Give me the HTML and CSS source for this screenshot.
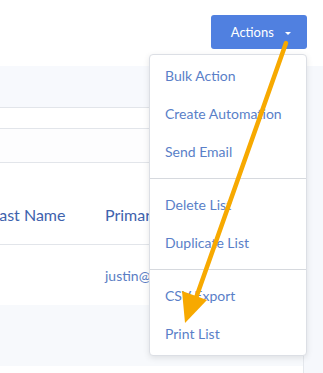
FILE: index.html
```html
<!DOCTYPE html>
<html lang="en">
<head>
    <meta charset="UTF-8">
    <title>List</title>
    <link rel="stylesheet" href="styles.css">
</head>
<body>
    <div class="topbar">
        <button class="actions-btn">Actions <span class="caret"></span></button>
    </div>
    <div class="main">
        <div class="panel">
            <div class="toolbar"></div>
            <div class="row-thin"></div>
            <div class="row-filter"></div>
            <div class="table-head">
                <div class="col col-last">Last Name</div>
                <div class="col col-email">Primary</div>
            </div>
            <div class="table-row">
                <div class="col col-last"></div>
                <div class="col col-email">justin@</div>
            </div>
            <div class="panel-foot"></div>
        </div>
    </div>

    <ul class="menu">
        <li>Bulk Action</li>
        <li>Create Automation</li>
        <li>Send Email</li>
        <li class="divider"></li>
        <li>Delete List</li>
        <li>Duplicate List</li>
        <li class="divider"></li>
        <li>CSV Export</li>
        <li>Print List</li>
    </ul>

    <!-- annotation arrow -->
    <svg class="arrow" width="323" height="373" viewBox="0 0 323 373">
        <line x1="286" y1="43" x2="196" y2="298" stroke="#f7a900" stroke-width="4.5" stroke-linecap="round"/>
        <polygon points="185,323 182,291 207,300" fill="#f7a900"/>
    </svg>
</body>
</html>
```

FILE: styles.css
```css
body {
    margin: 0;
    font-family: Lato, "Open Sans", sans-serif;
    background: #ffffff;
    overflow: hidden;
    height: 373px;
    position: relative;
}

.topbar {
    height: 66px;
    display: flex;
    justify-content: flex-end;
    align-items: flex-start;
    padding-right: 16px;
    box-sizing: border-box;
}

.actions-btn {
    margin-top: 15px;
    width: 96px;
    height: 34px;
    background: #5080e0;
    color: #ffffff;
    border: none;
    border-radius: 3px;
    font-family: Lato, sans-serif;
    font-size: 13px;
    padding: 0 0 0 4px;
}

.caret {
    display: inline-block;
    width: 0;
    height: 0;
    border-left: 3px solid transparent;
    border-right: 3px solid transparent;
    border-top: 3px solid #ffffff;
    margin-left: 8px;
    vertical-align: middle;
}

.main {
    background: #f6f8fc;
    padding-right: 15px;
    height: 307px;
}

.panel {
    background: #ffffff;
    border-right: 1px solid #e4e7ec;
    height: 100%;
    margin-right: 4px;
}

.toolbar {
    height: 41px;
    background: #f7f9fd;
    border-bottom: 1px solid #e2e5ea;
}

.row-thin {
    height: 20px;
    border-bottom: 1px solid #e2e5ea;
}

.row-filter {
    height: 33px;
    background: #fdfdfe;
    border-bottom: 1px solid #e2e5ea;
}

.table-head {
    display: flex;
    height: 82px;
    box-sizing: border-box;
    align-items: flex-end;
    padding-bottom: 20px;
    border-bottom: 1px solid #e2e5ea;
    color: #3e62ad;
    font-size: 16px;
    margin-left: -9px;
}

.table-row {
    display: flex;
    height: 60px;
    align-items: center;
    color: #5a7dc4;
    font-size: 14px;
    margin-left: -9px;
}

.col {
    white-space: nowrap;
}

.col-last {
    width: 114px;
}

.panel-foot {
    height: 61px;
    background: #f7f9fc;
}

.menu {
    position: absolute;
    top: 54px;
    left: 149px;
    width: 156px;
    margin: 0;
    padding: 2px 0;
    list-style: none;
    background: #ffffff;
    border: 1px solid #dcdfe5;
    border-radius: 4px;
    box-shadow: 0 2px 6px rgba(0, 0, 0, 0.1);
}

.menu li {
    height: 38px;
    line-height: 38px;
    padding-left: 15px;
    font-size: 14px;
    color: #5a7fc8;
}

.menu li.divider {
    height: 1px;
    margin: 7px 0;
    padding: 0;
    background: #d6d9de;
}

.arrow {
    position: absolute;
    top: 0;
    left: 0;
}
```
